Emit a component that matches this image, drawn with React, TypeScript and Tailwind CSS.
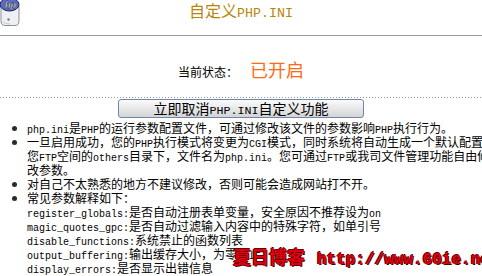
import React from 'react';

const cjk = "font-['Noto_Sans_CJK_SC',sans-serif]";

// split a string into ascii / cjk runs so latin text gets the narrow mono face
const Mix: React.FC<{ text: string; asc: string }> = ({ text, asc }) => (
    <>
        {text.split(/([\x21-\x7E]+)/).map((part, i) =>
            /^[\x21-\x7E]+$/.test(part) ? (
                <span key={i} className={asc}>{part}</span>
            ) : (
                <span key={i}>{part}</span>
            )
        )}
    </>
);

const body = "font-['Liberation_Mono',monospace] text-[10px] leading-none";

const PhpLogo = () => (
    <svg width="22" height="28" viewBox="0 0 22 28" className="absolute left-0 top-0">
        <path d="M1 6 L1 21 Q1 25.5 5 25.5 L15 25.5 Q19 25.5 19 21 L19 6 Z" fill="#eef0f4" stroke="#8a8f99" strokeWidth="1" />
        <circle cx="8.5" cy="19.5" r="1.2" fill="#777" />
        <path d="M3 22 Q6 24 10 24" stroke="#c4c8d0" strokeWidth="1" fill="none" />
        <ellipse cx="9.5" cy="4.5" rx="9.5" ry="6.5" fill="#5b6cc4" stroke="#1d2350" strokeWidth="1" />
        <text x="5" y="8" fontSize="9" fontStyle="italic" fontWeight="bold" fill="#fff" stroke="#111" strokeWidth="0.4" fontFamily="Liberation Sans, sans-serif">hp</text>
    </svg>
);

const Bullet = () => (
    <span className="absolute left-[-15px] top-[5px] w-[5px] h-[5px] rounded-full bg-[#2a2a2a]" />
);

const params: [string, string][] = [
    ['register_globals:', '是否自动注册表单变量，安全原因不推荐设为on'],
    ['magic_quotes_gpc:', '是否自动过滤输入内容中的特殊字符，如单引号'],
    ['disable_functions:', '系统禁止的函数列表'],
    ['output_buffering:', '输出缓存大小，为零禁止'],
    ['display_errors:', '是否显示出错信息'],
    ['max_execution_time:', '脚本最大执行时间，单位为秒'],
];

export default function App() {
    return (
        <div className={`relative w-[482px] h-[276px] overflow-hidden bg-white text-black ${cjk}`}>
            {/* header */}
            <div className="relative h-[36px] border-b border-[#999]">
                <PhpLogo />
                <div className="h-[20px] text-center text-[16px] leading-[20px] text-[#b8860b]">
                    自定义<span className="font-['Liberation_Mono',monospace] text-[13.3px] leading-none">PHP.INI</span>
                </div>
            </div>

            {/* status */}
            <div className="mt-[22px] h-[22px] flex items-baseline justify-center leading-[22px]">
                <span className="text-[12px] w-[60px]">当前状态：</span>
                <span className="ml-[12px] text-[18px] text-[#ff6a13]">已开启</span>
            </div>

            <div className="mt-[17px] h-px bg-[linear-gradient(to_right,#9a9a9a_1px,transparent_1px)] bg-[length:3px_1px]" />

            <div className="mt-[1px] flex justify-center">
                <button className="w-[246px] h-[19px] rounded-[3px] border border-[#6f86a8] bg-[linear-gradient(to_bottom,#fbfbfb,#e6e6e6_55%,#d4d4d4)] text-[14px] leading-[17px] text-black">
                    <Mix text="立即取消PHP.INI自定义功能" asc="font-['Liberation_Mono',monospace] text-[11.7px] leading-none" />
                </button>
            </div>

            {/* notes */}
            <ul className="mt-[3px] ml-[27px] w-[560px] text-[12px] leading-[14px] whitespace-nowrap">
                <li className="relative h-[14px]">
                    <Bullet />
                    <Mix text="php.ini是PHP的运行参数配置文件，可通过修改该文件的参数影响PHP执行行为。" asc={body} />
                </li>
                <li className="relative">
                    <Bullet />
                    <div className="h-[14px]"><Mix text="一旦启用成功，您的PHP执行模式将变更为CGI模式，同时系统将自动生成一个默认配置文件到" asc={body} /></div>
                    <div className="h-[14px]"><Mix text="您FTP空间的others目录下，文件名为php.ini。您可通过FTP或我司文件管理功能自由修" asc={body} /></div>
                    <div className="h-[14px]">改参数。</div>
                </li>
                <li className="relative h-[14px]">
                    <Bullet />
                    对自己不太熟悉的地方不建议修改，否则可能会造成网站打不开。
                </li>
                <li className="relative">
                    <Bullet />
                    <div className="h-[14px]">常见参数解释如下：</div>
                    {params.map(([k, v]) => (
                        <div key={k} className="h-[14px]">
                            <span className={body}>{k}</span>
                            <Mix text={v} asc={body} />
                        </div>
                    ))}
                </li>
            </ul>

            {/* watermark */}
            <div className="absolute left-[233px] top-[245px] flex items-baseline whitespace-nowrap font-bold text-[#e00010] [text-shadow:1px_1px_0_#4a0000,-1px_0_0_#6a0000,0_-1px_0_#6a0000]">
                <span className="text-[18px] leading-[22px]">夏日博客</span>
                <span className="ml-[12px] font-['Liberation_Mono',monospace] text-[16px] leading-none">http://www.60ie.net</span>
            </div>
        </div>
    );
}
